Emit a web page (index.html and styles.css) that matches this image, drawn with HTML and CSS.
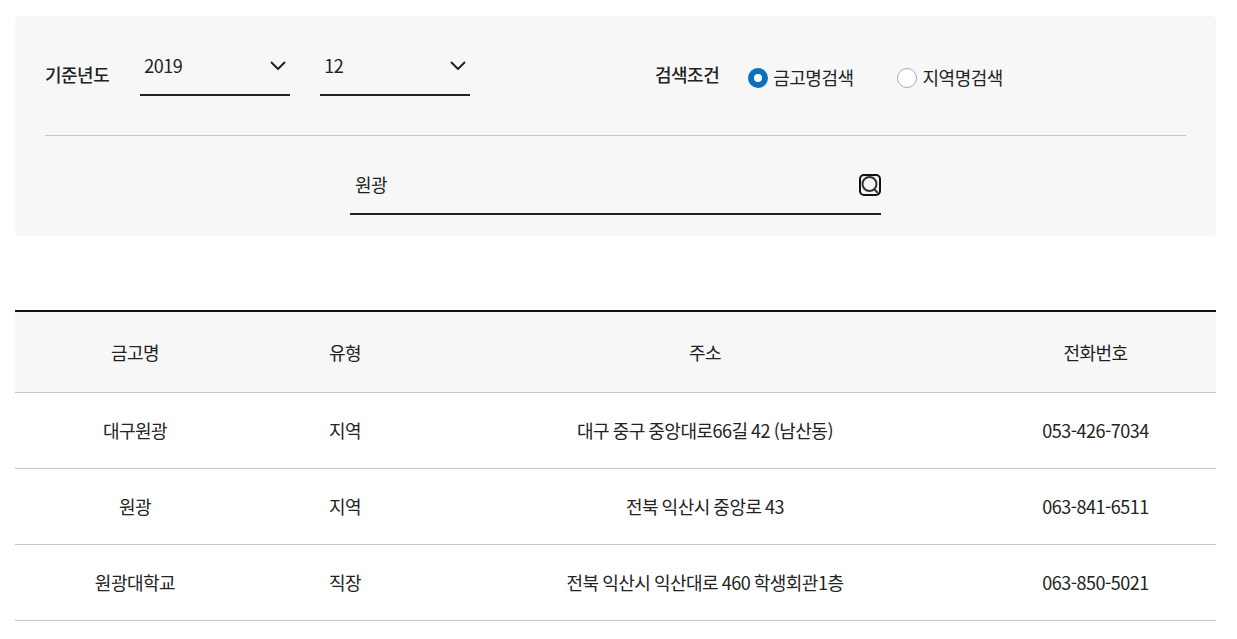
FILE: index.html
```html
<!DOCTYPE html>
<html lang="ko">
<head>
    <meta charset="UTF-8">
    <meta name="viewport" content="width=device-width, initial-scale=1.0">
    <title>금고 찾기</title>
    <link rel="stylesheet" href="styles.css">
</head>
<body>
    <form class="search-box">
        <div class="search-row">
            <div class="year-group">
                <span class="label">기준년도</span>
                <div class="select">
                    <span>2019</span>
                    <svg class="chevron" width="16" height="9" viewBox="0 0 16 9"><path d="M1 1l7 7 7-7" fill="none" stroke="#222" stroke-width="2"/></svg>
                </div>
                <div class="select">
                    <span>12</span>
                    <svg class="chevron" width="16" height="9" viewBox="0 0 16 9"><path d="M1 1l7 7 7-7" fill="none" stroke="#222" stroke-width="2"/></svg>
                </div>
            </div>
            <div class="cond-group">
                <span class="label">검색조건</span>
                <span class="radio checked"></span>
                <span class="radio-text first">금고명검색</span>
                <span class="radio"></span>
                <span class="radio-text">지역명검색</span>
            </div>
        </div>
        <div class="keyword-row">
            <div class="keyword">
                <span>원광</span>
                <svg class="search-icon" width="24" height="24" viewBox="0 0 24 24"><rect x="2" y="2" width="20" height="20" rx="4" fill="none" stroke="#111" stroke-width="2"/><circle cx="11.5" cy="11" r="7" fill="none" stroke="#333" stroke-width="2"/><path d="M16 16l4 4" stroke="#333" stroke-width="2"/></svg>
            </div>
        </div>
    </form>

    <table class="result">
        <colgroup>
            <col class="col-name">
            <col class="col-type">
            <col class="col-addr">
            <col class="col-tel">
        </colgroup>
        <thead>
            <tr>
                <th>금고명</th>
                <th>유형</th>
                <th>주소</th>
                <th>전화번호</th>
            </tr>
        </thead>
        <tbody>
            <tr>
                <td>대구원광</td>
                <td>지역</td>
                <td>대구 중구 중앙대로66길 42 (남산동)</td>
                <td>053-426-7034</td>
            </tr>
            <tr>
                <td>원광</td>
                <td>지역</td>
                <td>전북 익산시 중앙로 43</td>
                <td>063-841-6511</td>
            </tr>
            <tr>
                <td>원광대학교</td>
                <td>직장</td>
                <td>전북 익산시 익산대로 460 학생회관1층</td>
                <td>063-850-5021</td>
            </tr>
        </tbody>
    </table>
</body>
</html>
```

FILE: styles.css
```css
body {
    margin: 0;
    padding: 16px 21px 0 15px;
    background-color: #fff;
    color: #222;
    font-family: "Noto Sans CJK KR", "Noto Sans", sans-serif;
    font-size: 18px;
    letter-spacing: -0.5px;
    word-spacing: -1px;
}
.search-box {
    height: 220px;
    box-sizing: border-box;
    padding: 0 30px;
    background-color: #f7f7f7;
    border-radius: 5px;
}
.search-row {
    display: flex;
    height: 120px;
    box-sizing: border-box;
    border-bottom: 1px solid #c8c8c8;
}
.year-group {
    display: flex;
    align-items: flex-start;
    width: 610px;
}
.label {
    font-weight: 500;
    line-height: 24px;
    margin-top: 46px;
}
.select {
    display: flex;
    justify-content: space-between;
    align-items: center;
    width: 150px;
    height: 80px;
    box-sizing: border-box;
    border-bottom: 2px solid #222;
    padding: 20px 4px 0;
    margin-left: 30px;
}
.label + .select {
    margin-left: 31px;
}
.chevron {
    margin-top: 1px;
}
.cond-group {
    display: flex;
    align-items: flex-start;
}
.radio {
    width: 20px;
    height: 20px;
    box-sizing: border-box;
    margin-top: 52px;
    margin-right: 6px;
    background-color: #fff;
    border: 1px solid #aaa;
    border-radius: 50%;
}
.label + .radio {
    margin-left: 29px;
    margin-right: 5px;
}
.radio.checked {
    border: 6px solid #0a72bd;
}
.radio-text {
    line-height: 24px;
    margin-top: 49px;
}
.radio-text.first {
    margin-right: 43px;
}
.keyword-row {
    display: flex;
    justify-content: center;
}
.keyword {
    display: flex;
    justify-content: space-between;
    align-items: center;
    width: 531px;
    height: 80px;
    box-sizing: border-box;
    padding: 20px 0 0 5px;
    border-bottom: 2px solid #222;
    margin-top: -1px;
}
.search-icon {
    margin: 1px -1px 0 0;
}
.result {
    width: 1201px;
    margin-top: 74px;
    border-collapse: collapse;
    table-layout: fixed;
    border-top: 2px solid #111;
}
.col-name { width: 240px; }
.col-type { width: 180px; }
.col-addr { width: 540px; }
.col-tel { width: 241px; }
th {
    height: 79px;
    padding: 0 0 1px;
    background-color: #f7f7f7;
    border-bottom: 1px solid #c8c8c8;
    font-weight: 400;
}
td {
    height: 73px;
    padding: 0 0 2px;
    border-bottom: 1px solid #c8c8c8;
    text-align: center;
}
```
